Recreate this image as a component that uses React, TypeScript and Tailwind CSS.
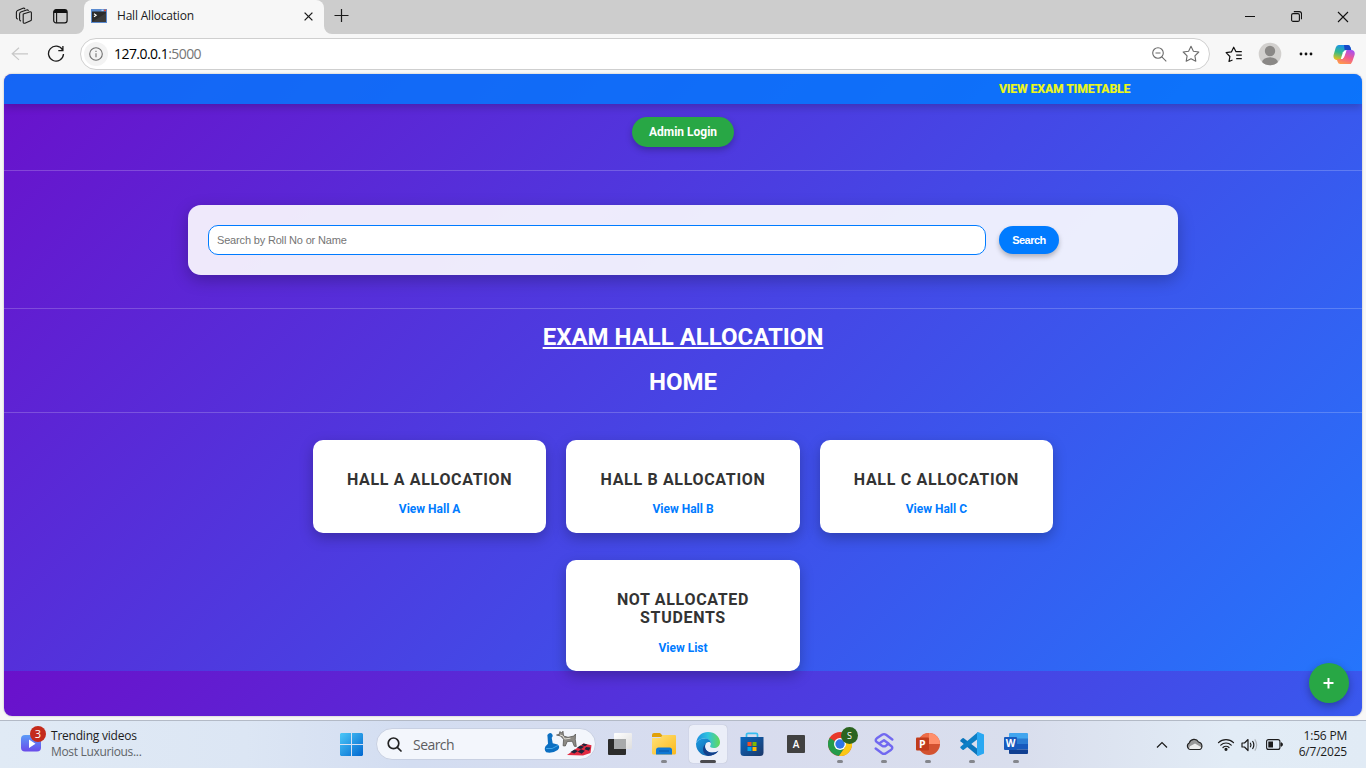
import React from 'react';

const UI = "font-['Open_Sans','Noto_Sans',sans-serif]";

function TabStrip() {
  return (
    <div className="flex h-[34px] bg-[#cdcdcd]">
      <div className="flex w-[84px] items-center pl-[15px] pb-[2px]">
        <svg width="18" height="18" viewBox="0 0 18 18" fill="none" stroke="#1b1b1b" strokeWidth="1.1" strokeLinejoin="round" strokeLinecap="round">
          <path d="M8.2 7.1 14.6 4.9Q16.4 4.5 16.4 6v6.4q0 1-.9 1.4l-5.6 2.4q-1.7.5-1.7-1.2z" />
          <path d="M5.6 13.9q-1-.2-1-1.4V7q0-1.4 1.2-1.9L11.6 3q1.3-.4 1.7.6" />
          <path d="M2.4 12q-1-.4-1-1.5V5.3q0-1.3 1.2-1.8L8 1.3q1.3-.4 1.8.5" />
        </svg>
        <svg className="ml-[20px]" width="15" height="15" viewBox="0 0 15 15">
          <rect x=".7" y=".7" width="13.4" height="13.2" rx="2.4" fill="none" stroke="#111" strokeWidth="1.2" />
          <path d="M.7 4V3A2.3 2.3 0 0 1 3 .7h9A2.3 2.3 0 0 1 14.1 3v1z" fill="#111" />
          <path d="M3.600 4v9.700" stroke="#111" strokeWidth="1.1" />
        </svg>
      </div>
      <div className="relative flex w-[240px] items-center rounded-t-[8px] bg-[#f7f7f7] pl-[7px] pb-[2px]">
        <svg className="absolute -left-[8px] bottom-0" width="8" height="8"><path d="M8 0v8H0a8 8 0 0 0 8-8" fill="#f7f7f7" /></svg>
        <svg className="absolute -right-[8px] bottom-0" width="8" height="8"><path d="M0 0v8h8a8 8 0 0 1-8-8" fill="#f7f7f7" /></svg>
        <svg width="16" height="14" viewBox="0 0 16 14">
          <rect width="16" height="14" fill="#5b8bd0" />
          <rect x="1" y="2.5" width="14" height="10.5" fill="#2c2c2c" />
          <path d="M1 13 15 4v9z" fill="#3b3b3b" />
          <rect x="13" y=".6" width="2" height="1.5" fill="#e04a3a" />
          <rect x="10.5" y=".6" width="2" height="1.5" fill="#b9cfee" />
          <path d="m3 4.800 2.200 1.500L3 7.800" fill="none" stroke="#fff" strokeWidth="1.1" />
        </svg>
        <span className={`${UI} ml-[10px] text-[12px] tracking-[-0.2px] text-[#1b1b1b]`}>Hall Allocation</span>
        <svg className="absolute left-[220px] top-[12px]" width="9" height="9" viewBox="0 0 9 9"><path d="M.6.6l7.8 7.8M8.4.6.6 8.4" stroke="#1b1b1b" strokeWidth="1.3" /></svg>
      </div>
      <svg className="ml-[10px] mt-[9px]" width="15" height="14" viewBox="0 0 15 14"><path d="M.5 6.500h14M7.500 0v13" stroke="#1b1b1b" strokeWidth="1.2" /></svg>
      <div className="ml-auto flex items-start pr-[17px] pt-[11px]">
        <svg width="10" height="12" viewBox="0 0 10 12"><path d="M0 5.500h10" stroke="#111" /></svg>
        <svg className="ml-[36px]" width="11" height="11" viewBox="0 0 11 11" fill="none" stroke="#111" strokeWidth="1.1">
          <rect x=".6" y="2.6" width="7.8" height="7.8" rx="1.5" />
          <path d="M2.800.6h5.500a2.200 2.200 0 0 1 2.200 2.200v5.500" />
        </svg>
        <svg className="ml-[35px]" width="12" height="12" viewBox="0 0 12 12"><path d="M1 1l10 10M11 1 1 11" stroke="#111" strokeWidth="1.1" /></svg>
      </div>
    </div>
  );
}

function Toolbar() {
  return (
    <div className="flex h-[40px] items-start bg-[#f7f7f7] pt-[4px]">
      <div className="flex h-[32px] w-[80px] items-center pl-[11px]">
        <svg width="18" height="14" viewBox="0 0 18 14" fill="none" stroke="#c8c8c8" strokeWidth="1.2"><path d="M1 6.800h16M8 .8 1.200 6.800 8 12.900" /></svg>
        <svg className="ml-[18px]" width="18" height="18" viewBox="0 0 18 18" fill="none" stroke="#1b1b1b" strokeWidth="1.3"><path d="M15.600 5A7.500 7.500 0 1 0 16.500 9M15.900 1v4.600h-4.600" /></svg>
      </div>
      <div className="flex h-[32px] w-[1130px] items-center rounded-full border border-[#cfcfcf] bg-white pl-[3px] pr-[9px]">
        <div className="flex size-[24px] items-center justify-center rounded-full bg-[#f3f3f3]">
          <svg width="14" height="14" viewBox="0 0 14 14" fill="none" stroke="#707070" strokeWidth="1.1"><circle cx="7" cy="7" r="6.3" /><path d="M7 6.200v4" /><path d="M7 3.700v1.300" /></svg>
        </div>
        <span className={`${UI} ml-[6px] pb-px text-[14px] tracking-[-0.55px] text-[#767676]`}><span className="text-black">127.0.0.1</span>:5000</span>
        <svg className="ml-auto" width="15" height="15" viewBox="0 0 15 15" fill="none" stroke="#6b6b6b" strokeWidth="1.1"><circle cx="6" cy="6" r="5.3" /><path d="M3.500 6h5M9.800 9.800l4.500 4.500" /></svg>
        <svg className="ml-[15px]" width="18" height="18" viewBox="0 0 18 18" fill="none" stroke="#6b6b6b" strokeWidth="1.1" strokeLinejoin="round"><path d="m9 1.300 2.400 4.900 5.400.8-3.900 3.800.9 5.400L9 13.700l-4.800 2.500.9-5.400L1.200 7l5.400-.8z" /></svg>
      </div>
      <div className="flex h-[32px] items-center pl-[15px]">
        <svg width="18" height="17" viewBox="0 0 18 17" fill="none" stroke="#111" strokeWidth="1.2" strokeLinejoin="round"><path d="M7.500 14 4 15.500l.9-5L1.100 6.700l5.300-.8L8.700 1.200l2.300 4.500h5.800M11.200 9.200h5.600M11.200 12.700h5.600" /></svg>
        <svg className="ml-[15px]" width="24" height="24" viewBox="0 0 24 24">
          <defs><clipPath id="avatar"><circle cx="12" cy="12" r="11.3" /></clipPath></defs>
          <circle cx="12" cy="12" r="11.3" fill="#d2d0ce" />
          <circle cx="12" cy="9" r="5.2" fill="#8a8886" />
          <ellipse cx="12" cy="20.5" rx="8" ry="5.3" fill="#8a8886" clipPath="url(#avatar)" />
        </svg>
        <svg className="ml-[17px]" width="14" height="4" viewBox="0 0 14 4" fill="#111"><circle cx="2" cy="2" r="1.4" /><circle cx="7" cy="2" r="1.4" /><circle cx="12" cy="2" r="1.4" /></svg>
        <svg className="ml-[20px]" width="22" height="21" viewBox="0 0 23 21">
          <defs>
            <linearGradient id="cpA" x1=".5" y1="0" x2=".2" y2="1"><stop offset="0" stopColor="#1a8ff0" /><stop offset=".5" stopColor="#32b98b" /><stop offset="1" stopColor="#f5c211" /></linearGradient>
            <linearGradient id="cpB" x1=".7" y1="0" x2=".3" y2="1"><stop offset="0" stopColor="#a850f0" /><stop offset=".5" stopColor="#f05a90" /><stop offset="1" stopColor="#ff9a4a" /></linearGradient>
          </defs>
          <path d="M6 .5h9.500q2 0 2.700 2.300l.9 2.900h-4.600q-2 0-2.600 2L9 16.500H4.500Q-.2 16 .6 11L2.800 3.500Q3.600.5 6 .5" fill="url(#cpA)" />
          <path d="M11.500.5h4q2 0 2.700 2.300l.9 2.900h-4.600q-1.500 0-2.200 1.300z" fill="#1748c7" />
          <path d="M17 20.500H7.500q-2 0-2.700-2.300L4 15.400h4.500q2 0 2.600-2L14 5.700h5q4.400.3 3.600 5l-2.400 7q-.9 2.800-3.200 2.800" fill="url(#cpB)" />
          <path d="m10.400 8.200 1.900-2.100h1.900L11.700 13.200 9.800 15.300H8.200z" fill="#fff" />
        </svg>
      </div>
    </div>
  );
}

function HallCard({ title, link }: { title: string; link: string }) {
  return (
    <div className="w-[233.4px] rounded-[10px] bg-white px-5 pb-[15.1px] pt-[30.9px] text-center shadow-[0_5px_14px_rgba(0,0,0,0.25)]">
      <h3 className="text-[16px] font-bold leading-[18.75px] tracking-[0.67px] text-[#333]">{title}</h3>
      <a className="mt-[11.6px] mb-[0.4px] block text-[12px] font-bold leading-[16px] text-[#007bff]">{link}</a>
    </div>
  );
}

function Page() {
  return (
    <div className="h-[646px] bg-[#f7f7f7] px-[4px]">
      <main className="relative h-[642px] overflow-hidden rounded-[8px] bg-[linear-gradient(135deg,#6a11cb,#2575fc)] bg-[length:100%_597px] font-['Roboto',sans-serif] shadow-[0_0_2px_rgba(0,0,0,0.3)]">
        <div className="relative h-[30px] bg-[#007bff]/80 pl-[995px] text-[12px] font-bold leading-[30px] text-[#ecf71c] shadow-[0_3px_8px_rgba(0,0,0,0.2)]">
          <span className="[text-shadow:0.5px_0_0_rgba(255,255,0,0.5)]">VIEW EXAM TIMETABLE</span>
        </div>
        <div className="flex h-[67px] items-start justify-center border-b border-white/20 pt-[13px]">
          <button className="h-[30px] w-[102px] rounded-full bg-[#28a745] text-[12px] font-bold text-white shadow-[0_3px_7px_rgba(0,0,0,0.25)]">Admin Login</button>
        </div>
        <div className="flex h-[138px] justify-center border-b border-white/20 pt-[34px]">
          <div className="flex h-[70px] w-[990px] items-center rounded-[13px] bg-white/90 pl-[20px] shadow-[0_5px_16px_rgba(0,0,0,0.25)]">
            <input className="h-[30px] w-[778px] rounded-[10px] border border-[#007bff] bg-white px-[8px] font-['Liberation_Sans',sans-serif] text-[11px] tracking-[-0.17px] placeholder:text-[#757575]" placeholder="Search by Roll No or Name" />
            <button className="ml-[13px] h-[28px] w-[60px] rounded-full bg-[#007bff] font-['Liberation_Sans',sans-serif] text-[11px] font-bold tracking-[-0.5px] text-white shadow-[0_3px_5px_rgba(0,0,0,0.25)]">Search</button>
          </div>
        </div>
        <div className="h-[104px] border-b border-white/20 pt-[14px] text-center text-[24px] font-bold leading-[28px] text-white">
          <h1 className="underline decoration-2 underline-offset-[2px]">EXAM HALL ALLOCATION</h1>
          <h2 className="mt-[17px]">HOME</h2>
        </div>
        <div className="flex flex-wrap justify-center gap-x-[20px] gap-y-[27px] px-[200px] pt-[27px]">
          <HallCard title="HALL A ALLOCATION" link="View Hall A" />
          <HallCard title="HALL B ALLOCATION" link="View Hall B" />
          <HallCard title="HALL C ALLOCATION" link="View Hall C" />
          <HallCard title="NOT ALLOCATED STUDENTS" link="View List" />
        </div>
        <button className="absolute bottom-[13px] right-[13px] flex size-[40px] items-center justify-center rounded-full bg-[#28a745] shadow-[0_3px_8px_rgba(0,0,0,0.3)]">
          <svg width="12" height="12" viewBox="0 0 12 12"><path d="M.5 6h10M5.500 1v10.500" stroke="#fff" strokeWidth="2" /></svg>
        </button>
      </main>
    </div>
  );
}

function TaskbarApp({ children, active, open }: { children: React.ReactNode; active?: boolean; open?: boolean }) {
  return (
    <div className="flex w-[44px] justify-center">
      <div className={`relative flex h-[38px] w-[38px] items-center justify-center rounded-[4px] ${active ? 'bg-[#ebeef8] shadow-[0_0_1px_rgba(0,0,0,0.25)]' : ''}`}>
        {children}
        {active && <span className="absolute bottom-0 h-[3px] w-[16px] rounded-full bg-[#4a4a4e]" />}
        {open && <span className="absolute bottom-0 h-[3px] w-[6px] rounded-full bg-[#84868c]" />}
      </div>
    </div>
  );
}

function Taskbar() {
  return (
    <div className={`flex h-[48px] border-t border-[#b3bac6] bg-[linear-gradient(90deg,#e0eaf5_0%,#dce6f4_18%,#d3ddf1_30%,#d8dcee_55%,#d9deed_75%,#e2ecf6_90%,#e1ebf5_100%)] ${UI}`}>
      <div className="flex w-[329px] pl-[20px]">
        <div className="relative h-[47px] w-[31px]">
          <svg className="absolute left-[1px] top-[14px]" width="20" height="17" viewBox="0 0 20 17">
            <defs><linearGradient id="vid" x1="0" y1="0" x2="0" y2="1"><stop offset="0" stopColor="#5a9cf8" /><stop offset="1" stopColor="#6a4bea" /></linearGradient></defs>
            <rect width="20" height="16.5" rx="4" fill="url(#vid)" />
            <path d="M8 4.500v8.500l6.500-4.200z" fill="#fff" />
          </svg>
          <span className="absolute left-[10px] top-[5px] size-[16px] rounded-full bg-[#c42b1c] text-center text-[11px] leading-[16px] text-white">3</span>
        </div>
        <div className="pt-[7px] text-[12px] leading-[16px]">
          <div className="tracking-[-0.22px] text-[#1b1b1b]">Trending videos</div>
          <div className="tracking-[-0.33px] text-[#606468]">Most Luxurious...</div>
        </div>
      </div>
      <div className="flex items-start pt-[4px]">
        <div className="flex h-[38px] w-[44px] items-center justify-center">
          <svg width="23" height="23" viewBox="0 0 23 23">
            <defs><linearGradient id="win" gradientUnits="userSpaceOnUse" x1="0" y1="0" x2="23" y2="23"><stop offset="0" stopColor="#4cc8f8" /><stop offset="1" stopColor="#0067d0" /></linearGradient></defs>
            <path d="M1 0h10v11H0V1zM12 0h10l1 1v10H12zM0 12h11v11H1l-1-1zM12 12h11v10l-1 1H12z" fill="url(#win)" />
          </svg>
        </div>
        <div className="ml-[3px] mt-[3px] flex h-[32px] w-[220px] items-center rounded-full border border-[#c8d0e2] bg-[#f3f6fc] pl-[10px]">
          <svg width="15" height="15" viewBox="0 0 15 15" fill="none" stroke="#222" strokeWidth="1.7" strokeLinecap="round"><circle cx="6.5" cy="6.3" r="5.3" /><path d="m10.300 10.300 3.700 3.700" /></svg>
          <span className="ml-[11px] text-[14px] tracking-[-0.55px] text-[#5d5d60]">Search</span>
          <svg className="ml-auto mr-[1px]" width="50" height="28" viewBox="0 0 50 28">
            <path d="M3.500 6.500a2.600 2.600 0 1 1 4.200 1.200l1 5.500 5 1.200q3 2.500 0 5.500-5 3.700-11.500 2.400-2.500-2.500-.7-6l2.500-2.600z" fill="#0b6fc2" />
            <path d="M2.200 18.500q6 1.500 11.700-3" stroke="#40a5e8" fill="none" />
            <path d="m12.500 5 2.500-.5 1-3 1.500 1.500 1.500-1.800.5 4.800 4.500 1.300 6-1.300 1.500-2-.2 5.500 1 7-2-.2-2-5-5 .2-2 4.500-2.200-.2.500-6.500-3-3.300z" fill="#8c8a85" stroke="#4c4a48" strokeWidth=".7" />
            <path d="m16 5 3 1 1.500 3 6-.8" stroke="#e0ddd5" fill="none" />
            <path d="M23 25 39.500 13.500l8 1.800L46.500 23 39 25.500z" fill="#e32b42" />
            <path d="m26.500 22 4-2.600 3.500 1.500-3.700 2.700zM33 17.800l3.200-2.200 4 1.200-3.200 2.300zM37 19.200l4 1.500-3.300 3-4-2zM42 17l4.500.4-1.500 3.300-4.500-1.500zM39.500 13.500l4 .9-2.500 1.800-3.500-1.200z" fill="#20253b" />
          </svg>
        </div>
        <div className="ml-[2px] flex">
          <TaskbarApp>
            <svg width="24" height="24" viewBox="0 0 24 24">
              <defs><linearGradient id="tv" x1="0" y1="0" x2="1" y2="1"><stop offset="0" stopColor="#fff" /><stop offset="1" stopColor="#dedede" /></linearGradient></defs>
              <rect x="0" y="7" width="18" height="16" rx="1" fill="#2c2c2b" /><rect x="6" y="1" width="18" height="16" rx="1" fill="url(#tv)" /><path d="M6 7h12v10H6z" fill="#a8aaab" />
            </svg>
          </TaskbarApp>
          <TaskbarApp open>
            <svg width="24" height="24" viewBox="0 0 24 24">
              <defs><linearGradient id="fold" x1="0" y1="0" x2="1" y2="1"><stop offset="0" stopColor="#ffe27a" /><stop offset="1" stopColor="#fbb91b" /></linearGradient></defs>
              <path d="M0 3q0-2 2-2h6l3 3h11q2 0 2 1H0z" fill="#e1a108" /><path d="M0 6h8l3-3h12q1 0 1 1v17q0 1.500-1.500 1.500h-21Q0 22.500 0 21z" fill="url(#fold)" />
              <path d="M4 22.500V18q0-2.500 2.500-2.500h11q2.500 0 2.500 2.500v4.500z" fill="#0f78d3" /><path d="M7 19h10" stroke="#0a57a8" />
            </svg>
          </TaskbarApp>
          <TaskbarApp active>
            <svg width="24" height="24" viewBox="0 0 24 24">
              <defs>
                <linearGradient id="edA" x1="0" y1=".3" x2="1" y2=".3"><stop offset="0" stopColor="#1c8ee0" /><stop offset=".5" stopColor="#2fc4de" /><stop offset="1" stopColor="#63d957" /></linearGradient>
                <linearGradient id="edB" x1="0" y1="0" x2="1" y2="1"><stop offset="0" stopColor="#1b9de2" /><stop offset="1" stopColor="#0c4f9c" /></linearGradient>
              </defs>
              <path d="M.2 10.500C1.200 4 6 0 12 0c7 0 12 5 12 10.200 0 3.600-2.900 5.800-6.200 5.800-3 0-4.300-1.100-3.500-2.200 1.900-3.400-.5-7.300-5.500-7.300C4.500 6.500 1.500 8.500.2 10.500" fill="url(#edA)" />
              <path d="M.1 11C1.700 7.900 5.200 6.500 8.800 6.500c4 0 6.200 2.300 6.100 4.700-.8-1.300-2.500-1.700-4-.6-3.700 3-1.700 10 5.500 10 2.700 0 4.700-.8 6-1.800C18.500 24 10.500 25.500 5 21.700 1.600 19.300-.4 15.300.1 11" fill="url(#edB)" />
              <path d="M9.500 12c-2 4.600 1.800 9.200 8 8.600 2.200-.2 4-1 5-1.800-2.200 3.200-6 5.200-10.500 5.200-5.600-2-6.500-8.600-2.500-12" fill="#123f8a" />
            </svg>
          </TaskbarApp>
          <TaskbarApp>
            <svg width="24" height="24" viewBox="0 0 24 24">
              <defs><linearGradient id="store" x1="0" y1="0" x2="1" y2="1"><stop offset="0" stopColor="#0a6ac2" /><stop offset="1" stopColor="#1c3768" /></linearGradient></defs>
              <path d="M6.500 5.500V2.500q0-1.200 1.500-1.200h8q1.500 0 1.500 1.200v3" fill="none" stroke="#36bdf0" strokeWidth="1.7" /><path d="M.5 5h23v15.500Q23.500 24 20 24H4Q.5 24 .5 20.500z" fill="url(#store)" />
              <path d="M7.500 10h4v4h-4z" fill="#f25022" /><path d="M12.500 10h4v4h-4z" fill="#7fba00" /><path d="M7.500 15h4v4h-4z" fill="#00a4ef" /><path d="M12.500 15h4v4h-4z" fill="#ffb900" />
            </svg>
          </TaskbarApp>
          <TaskbarApp><span className="flex size-[18px] items-center justify-center rounded-[1px] bg-[#414141] pt-px text-[10px] font-semibold text-white">A</span></TaskbarApp>
          <TaskbarApp open>
            <svg width="24" height="24" viewBox="0 0 24 24">
              <circle cx="12" cy="12" r="12" fill="#e8392b" /><path d="M12 12 1.600 6A12 12 0 0 0 11 24l6.200-9z" fill="#249b4b" /><path d="M12 6h10.400A12 12 0 0 1 11 24l6.200-9z" fill="#fbc815" />
              <circle cx="12" cy="12" r="6" fill="#fff" /><circle cx="12" cy="12" r="4.7" fill="#2f75e8" />
            </svg>
            <span className="absolute left-[20px] top-[2px] size-[17px] rounded-full bg-[#2b6420] text-center text-[9px] leading-[17px] text-white">S</span>
          </TaskbarApp>
          <TaskbarApp open>
            <svg width="20" height="24" viewBox="0 0 20 24" fill="none" stroke="#7168f0" strokeWidth="2.4" strokeLinejoin="round" strokeLinecap="round">
              <path d="M18.300 7.500 12 2.800Q10 1.400 8 2.800L2.800 6.300Q.6 8.200 2.800 10L8 13.700Q10 15 12 13.700L14.500 11.500 10 8.200 6.500 10.500" />
              <path d="M1.700 16.500 8 21.200Q10 22.600 12 21.200L17.200 17.700Q19.400 15.800 17.200 14L14.500 12" />
            </svg>
          </TaskbarApp>
          <TaskbarApp open>
            <svg width="24" height="24" viewBox="0 0 24 24">
              <circle cx="13" cy="12" r="11" fill="#d35230" /><path d="M13 1a11 11 0 0 1 11 11H13z" fill="#ff8f6b" /><path d="M13 1v11H2A11 11 0 0 1 13 1" fill="#ed6c47" />
              <rect x="0" y="5.5" width="13" height="13" rx="1" fill="#c13b1b" /><text x="6.4" y="15.8" fontSize="10.5" fontWeight="700" fill="#fff" textAnchor="middle">P</text>
            </svg>
          </TaskbarApp>
          <TaskbarApp open>
            <svg width="24" height="24" viewBox="0 0 24 24">
              <path d="M.5 8 2.500 6.200q.7-.4 1.300 0L18 17.300V24L.5 9.200q-.5-.6 0-1.200" fill="#0b76bd" /><path d="M.5 16 2.500 17.800q.7.4 1.300 0L18 6.700V0L.5 14.800q-.5.600 0 1.200" fill="#0d7fc6" /><path d="m18 0 6 2.500v19L18 24l-1-1V1z" fill="#2aa8f2" />
            </svg>
          </TaskbarApp>
          <TaskbarApp open>
            <svg width="24" height="22" viewBox="0 0 24 22">
              <path d="M5 1q0-1 1-1h17q1 0 1 1v5H5z" fill="#41a5ee" /><path d="M5 5.500h19V11H5z" fill="#2b7cd3" /><path d="M5 11h19v5.500H5z" fill="#185abd" /><path d="M5 16.500h19V20q0 1-1 1H6q-1 0-1-1z" fill="#103f91" />
              <rect y="4" width="13" height="13" rx="1" fill="#185abd" /><text x="6.5" y="14" fontSize="10" fontWeight="700" fill="#fff" textAnchor="middle">W</text>
            </svg>
          </TaskbarApp>
        </div>
      </div>
      <div className="ml-auto flex h-[47px] items-center pr-[19px]">
        <svg width="12" height="8" viewBox="0 0 12 8" fill="none" stroke="#1b1b1b" strokeWidth="1.2"><path d="m1 6.500 5-5 5 5" /></svg>
        <svg className="ml-[18px]" width="17" height="13" viewBox="0 0 17 13"><path d="M4.500 11.500A3.500 3.500 0 0 1 3.300 4.900 5 5 0 0 1 12.500 4a4 4 0 0 1 1.300 7.500z" fill="#999" stroke="#222" strokeWidth="1.1" /><path d="M3.500 11a2.500 2.500 0 0 1 1.800-3.500L9 5.500l6.300 3.700q-.5 1.800-2 1.800z" fill="#ededed" /></svg>
        <svg className="ml-[14px]" width="18" height="13" viewBox="0 0 18 13" fill="none" stroke="#1b1b1b" strokeWidth="1.2" strokeLinecap="round"><path d="M1.500 4.700a10.500 10.500 0 0 1 15 0M3.800 7.200a7.200 7.200 0 0 1 10.400 0M6 9.500a4.200 4.200 0 0 1 6 0" /><circle cx="9" cy="11.3" r="1" fill="#1b1b1b" /></svg>
        <svg className="ml-[6px]" width="17" height="14" viewBox="0 0 17 14" fill="none" stroke="#1b1b1b" strokeWidth="1.2" strokeLinejoin="round"><path d="M1 5v4h2.500L7 12.500v-11L3.500 5zM9.300 4.800q1.400 2.200 0 4.400M11.500 3q2.700 4 0 8" /><path d="M13.800 1.300q3.700 5.700 0 11.400" stroke="#b0b5bb" /></svg>
        <svg className="ml-[8px]" width="17" height="11" viewBox="0 0 17 11"><rect x=".6" y=".6" width="13.3" height="9.8" rx="2" fill="none" stroke="#1b1b1b" strokeWidth="1.1" /><rect x="2.3" y="2.5" width="4.7" height="6" fill="#1b1b1b" /><path d="M15 3.800q1.500.2 1.500 1.700T15 7.200z" fill="#1b1b1b" stroke="#1b1b1b" /></svg>
        <div className="w-[64px] pb-px text-right text-[12px] leading-[16px] tracking-[-0.2px] text-[#1b1b1b]"><div>1:56 PM</div><div>6/7/2025</div></div>
      </div>
    </div>
  );
}

export default function App() {
  return (
    <div className="flex h-[768px] w-[1366px] flex-col overflow-hidden">
      <TabStrip />
      <Toolbar />
      <Page />
      <Taskbar />
    </div>
  );
}
